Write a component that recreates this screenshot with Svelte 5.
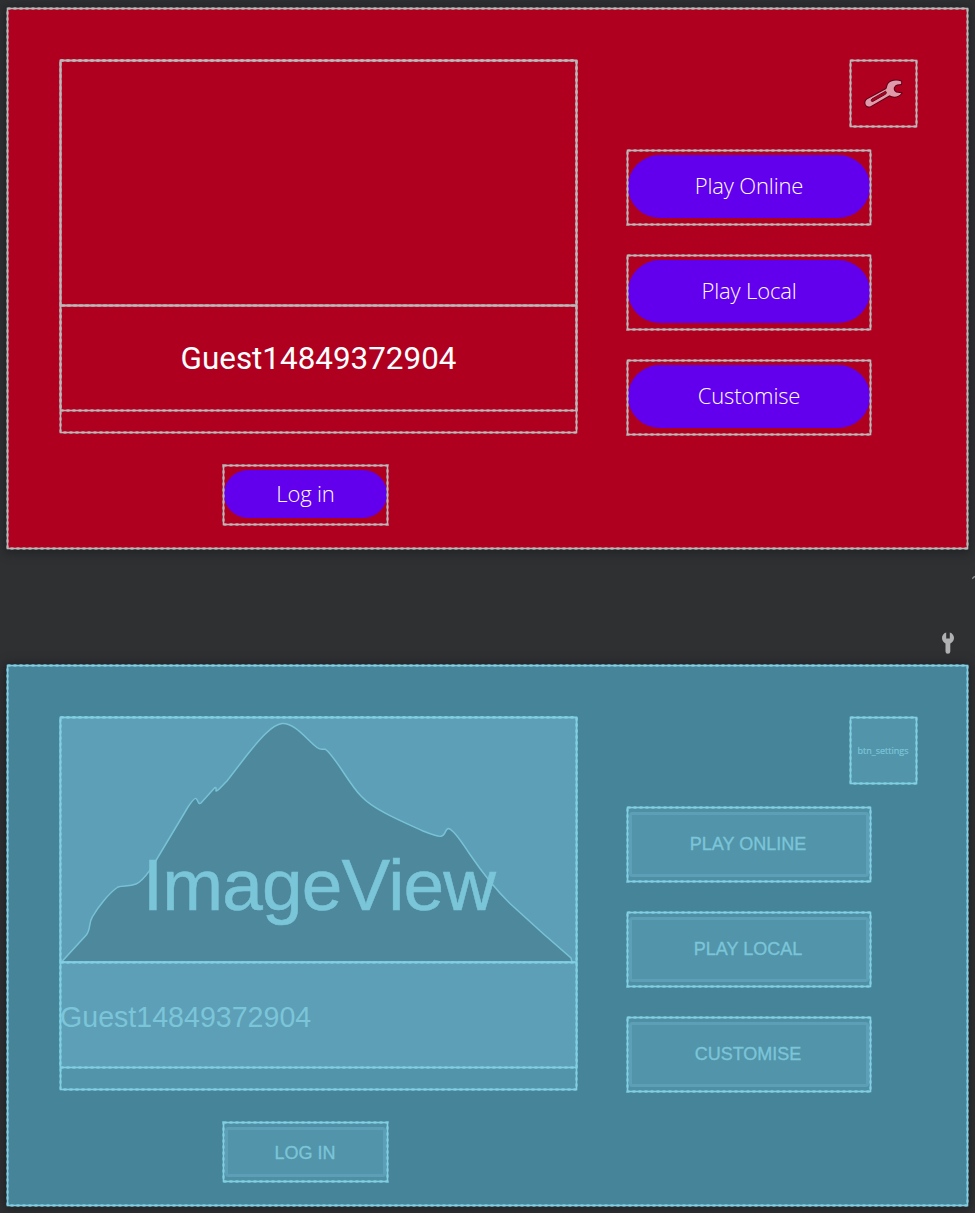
<script>
  const buttons = ['Play Online', 'Play Local', 'Customise'];
  const guest = 'Guest14849372904';
</script>

{#snippet frame()}
  <svg class="frame" aria-hidden="true">
    <rect class="dash" x="0.5" y="0.5" width="100%" height="100%" />
    <rect class="line" x="0.5" y="0.5" width="100%" height="100%" />
  </svg>
{/snippet}

<main>
  <section class="screen design">
    {@render frame()}
    <div class="left">
      <div class="panel">
        {@render frame()}
        <div class="image">{@render frame()}</div>
        <div class="guest">{@render frame()}<span>{guest}</span></div>
      </div>
      <div class="button login">{@render frame()}<div class="face"><span>Log in</span></div></div>
    </div>
    <div class="right">
      <div class="settings">
        {@render frame()}
        <svg class="wrench" width="66" height="66" viewBox="0 0 66 66">
          <path d="M51.2 21.6C47 19.6 41.5 20.3 38.6 23.3C36.9 25.3 37.4 27.4 36.3 28.9L17.3 39.3C13.4 42 16 47.8 20.1 46.4L39.5 35.3C43.5 37.7 49 36.8 51.3 33.2L46.2 32.6Q43.3 30.9 43.8 27.8Q45 24.6 47.2 24.4L51.1 24Z" />
          <path class="slot" d="M35.6 31.2L22 38.9C20.4 40.2 21.2 42 22.9 41.4L35.7 34.1Q37.2 32.5 35.6 31.2Z" />
        </svg>
      </div>
      {#each buttons as label}
        <div class="button">{@render frame()}<div class="face"><span>{label}</span></div></div>
      {/each}
    </div>
  </section>

  <div class="tools">
    <svg class="tool" width="14" height="24" viewBox="0 0 14 24">
      <path d="M5.2 1.4C2.4 2.2 1 4.4 1 7C1 9.6 2.5 11.5 4.5 12.5V20.5Q4.5 22.7 6.9 22.7Q9.3 22.7 9.3 20.5V12.5C11.5 11.5 13 9.6 13 7C13 4.4 11.5 2.2 8.8 1.4V7.6H5.2Z" />
    </svg>
    <svg class="curve" width="4" height="5" viewBox="0 0 4 5"><path d="M.3 3.8Q2 1.5 4 1.2" /></svg>
  </div>

  <section class="screen blueprint">
    {@render frame()}
    <div class="left">
      <div class="panel">
        {@render frame()}
        <div class="image">
          <svg class="mountain" width="516" height="245" viewBox="0 0 516 245">
            <path d="M1.5 245L26.3 218C31 212 28.5 206 32.3 200C38 190 49 176 58 170C63 168 69 170 76 167C83 164 87 157 91.5 151L128 90Q134.5 80.5 136 81.5C138 83 138 88 141 86L154.5 71Q156.5 69 156 74C157 75 163 68 167 64L187 38C199 23 212 7.5 222 6.5C235 5.5 248 24 257 30.5C262 34 263 31.5 265.5 32.3C275 39 289 67 301 79C314 93 341 104 363 114Q378 120 381 119.3C386 118.5 385 111.3 388.5 111.4C395 113 404 129 410 137.5C424 158 434 171 450 186.5L483 216.5L511 241L512 245Z" />
          </svg>
          <span>ImageView</span>
          {@render frame()}
        </div>
        <div class="guest">{@render frame()}<span>{guest}</span></div>
      </div>
      <div class="button login">{@render frame()}<div class="face"><span>LOG IN</span></div></div>
    </div>
    <div class="right">
      <div class="settings">{@render frame()}<span>btn_settings</span></div>
      {#each buttons as label}
        <div class="button">{@render frame()}<div class="face"><span>{label.toUpperCase()}</span></div></div>
      {/each}
    </div>
  </section>
</main>

<style>
  :global(body) { background: #2e3032; }
  main {
    box-sizing: border-box;
    width: 975px;
    height: 1213px;
    padding: 8px 7px 0;
    overflow: hidden;
    background: #2e3032;
  }
  .screen {
    box-sizing: border-box;
    position: relative;
    display: flex;
    gap: 51px;
    width: 961px;
    height: 541px;
    padding: 52px 0 0 53px;
    box-shadow: 0 1px 9px 2px #202124;
  }
  .design { background: #b00020; --line: #b9b9b9; }
  .blueprint { background: #468499; --line: #82cfe3; }
  .frame {
    position: absolute;
    inset: 0;
    width: calc(100% - 1px);
    height: calc(100% - 1px);
    overflow: visible;
    pointer-events: none;
  }
  .frame rect { fill: none; stroke: var(--line); }
  .frame .dash { stroke-width: 2.8; stroke-dasharray: 3 3; opacity: .6; }
  .frame .line { stroke-width: 1.6; }
  .left { width: 516px; }
  .panel { position: relative; width: 517px; height: 373px; }
  .image { position: relative; height: 246px; margin-bottom: -1px; }
  .guest {
    position: relative;
    display: flex;
    align-items: center;
    justify-content: center;
    height: 106px;
  }
  .right { display: flex; flex-direction: column; width: 290px; }
  .settings {
    position: relative;
    display: flex;
    align-items: center;
    justify-content: center;
    align-self: flex-end;
    width: 67px;
    height: 67px;
    margin-bottom: 23px;
  }
  .button {
    box-sizing: border-box;
    position: relative;
    width: 244px;
    height: 75px;
    padding: 5px 1px 7px;
    margin-bottom: 30px;
  }
  .button.login { width: 165px; height: 60px; margin: 32px 0 0 163px; }
  .face {
    box-sizing: border-box;
    display: flex;
    align-items: center;
    justify-content: center;
    height: 100%;
  }
  span { white-space: pre; }

  .design .guest span { padding-top: 1px; font: 31.4px/38px Roboto, sans-serif; color: #fff; }
  .design .face {
    padding-bottom: 3px;
    border-radius: 32px;
    background: #6200ee;
    color: #fff;
    font: 300 22px/28px "Open Sans", sans-serif;
    letter-spacing: -.15px;
  }
  .wrench { flex: none; margin: -2px 0 0 -2px; fill: #e19aaa; stroke: #5d0016; stroke-width: .9; }
  .wrench path:first-child { paint-order: stroke; stroke-width: 2; }
  .wrench .slot { fill: #b00020; }

  .tools {
    display: flex;
    align-items: flex-start;
    height: 116px;
    padding-left: 934px;
  }
  .tool { flex: none; margin-top: 82px; fill: #afb1b3; }
  .curve { flex: none; margin: 26px 0 0 17px; fill: none; stroke: #8b8d8f; stroke-width: 1.3; }

  .blueprint span { color: #7bc5d9; font-family: "Liberation Sans", sans-serif; }
  .blueprint .panel { background: #5294a9; }
  .blueprint .image { display: flex; justify-content: center; background: #5d9fb7; }
  .mountain { position: absolute; inset: 0; fill: #4e889c; stroke: #78c2d6; stroke-width: 1.5; }
  .blueprint .image span {
    position: relative;
    padding: 126px 0 0 1px;
    font-size: 73px;
    line-height: 84px;
    letter-spacing: -.8px;
    -webkit-text-stroke: .5px #7bc5d9;
  }
  .blueprint .guest { justify-content: flex-start; background: #5d9fb7; }
  .blueprint .guest span { padding-top: 4px; font-size: 28.6px; }
  .blueprint .settings { background: #5294a9; }
  .blueprint .settings span { margin-left: -1px; padding-top: 1px; font: 9px/12px "Open Sans", sans-serif; -webkit-text-stroke: .2px #7bc5d9; }
  .blueprint .button { padding: 5px 2px; background: #4e8fa4; }
  .blueprint .face { padding: 0 2px 2px 0; border: 3px solid #5c9fb6; border-radius: 3px; background: #5294a9; }
  .blueprint .login .face { padding: 1px 1px 0 0; }
  .blueprint .face span { font-size: 18px; line-height: 20px; -webkit-text-stroke: .35px #7bc5d9; }
</style>
